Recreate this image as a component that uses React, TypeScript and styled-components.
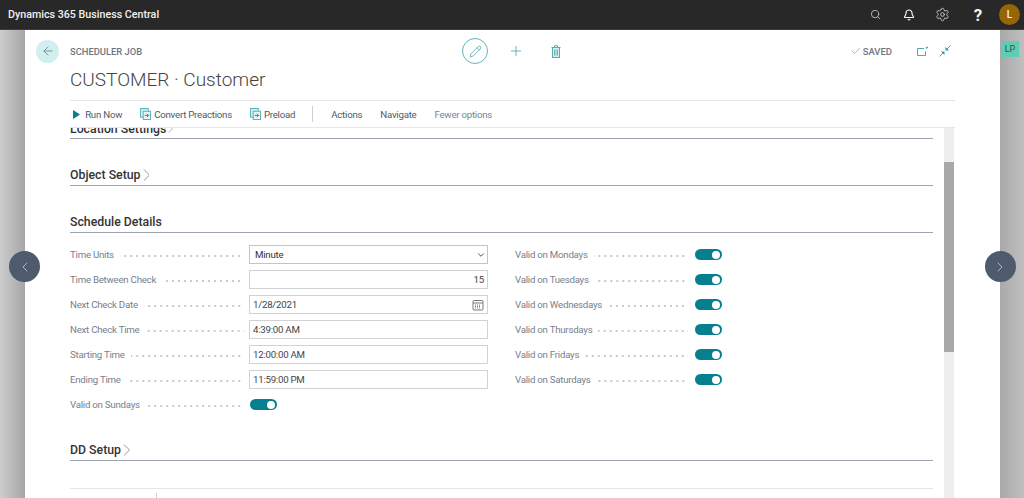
import * as React from 'react'
import styled, { createGlobalStyle } from 'styled-components'
import {
  ArrowLeft,
  Bell,
  Check,
  ChevronDown,
  ChevronLeft,
  ChevronRight,
  Pencil,
  Plus,
  Search,
  Settings,
} from 'lucide-react'

const GlobalStyle = createGlobalStyle`
  html, body {
    margin: 0;
    padding: 0;
    background: #fff;
    overflow: hidden;
  }
  * { box-sizing: border-box; }
`

const Page = styled.div`
  position: relative;
  width: 1024px;
  height: 498px;
  overflow: hidden;
  font-family: Roboto, "Open Sans", sans-serif;
  display: flex;
  flex-direction: column;
`

const TopBar = styled.header`
  height: 30px;
  flex: none;
  background: #282828;
  border-bottom: 1px solid #3c3c3c;
  display: flex;
  align-items: center;
  padding: 0 4px 0 8px;
  color: #fff;
`

const Brand = styled.div`
  font-size: 10.7px;
  font-weight: 500;
  color: #f0f0f0;
  flex: 1;
`

const TopIcons = styled.div`
  display: flex;
  align-items: center;
  gap: 20px;
  color: #d8d8d8;
`

const SearchSlot = styled.span`
  display: flex;
  margin-right: 2px;
`

const Avatar = styled.div`
  width: 21px;
  height: 21px;
  border-radius: 50%;
  background: #956508;
  color: #f4f4f4;
  font-size: 10px;
  font-weight: 500;
  display: flex;
  align-items: center;
  justify-content: center;
  margin-left: -5px;
`

const Help = styled.span`
  font-size: 17px;
  font-weight: 700;
  width: 12px;
  margin-left: 2px;
  text-align: center;
  color: #f4f4f4;
`

const Stage = styled.div`
  flex: 1;
  min-height: 0;
  display: flex;
`

const LeftStrip = styled.div`
  width: 25px;
  flex: none;
  background: linear-gradient(90deg, #cdcdcd, #a6a6a6);
`

const RightStrip = styled.div`
  width: 24px;
  flex: none;
  padding: 11px 0 0 1px;
  background: linear-gradient(90deg, #a9a9a9, #bfbfbf);
`

const Badge = styled.div`
  width: 18px;
  height: 16px;
  background: #5fcdb4;
  color: #35514a;
  font-size: 9px;
  display: flex;
  align-items: center;
  justify-content: center;
`

const Card = styled.main`
  flex: 1;
  min-width: 0;
  background: #fff;
  display: flex;
  flex-direction: column;
  padding: 0 45px 0 45px;
`

const HeadRow = styled.div`
  height: 36px;
  padding-top: 6px;
  margin-left: -34px;
  display: flex;
  align-items: center;
  flex: none;
`

const BackButton = styled.div`
  width: 23px;
  height: 23px;
  border-radius: 50%;
  background: #d3eeee;
  color: #5d7f85;
  display: flex;
  align-items: center;
  justify-content: center;
  margin-right: 11px;
`

const Kicker = styled.div`
  width: 392px;
  font-size: 9.4px;
  font-weight: 500;
  color: #6d7683;
`

const PencilCircle = styled.div`
  width: 26px;
  height: 26px;
  border-radius: 50%;
  border: 1px solid #62b6bb;
  color: #4f9aa0;
  display: flex;
  align-items: center;
  justify-content: center;
  margin-right: 20px;
`

const HeadAction = styled.div<{ $gap: number }>`
  color: #58acb1;
  display: flex;
  margin-right: ${p => p.$gap}px;
`

const Saved = styled.div`
  margin-left: auto;
  display: flex;
  align-items: center;
  gap: 1px;
  color: #6f7784;
  font-size: 9.5px;
  font-weight: 500;
  margin-right: 25px;
`

const HeadEnd = styled.div`
  display: flex;
  align-items: center;
  gap: 11px;
  margin-right: 4px;
`

const Title = styled.h1`
  margin: 0;
  height: 35px;
  flex: none;
  font-size: 19px;
  line-height: 28px;
  font-weight: 300;
  color: #444;
  border-bottom: 1px solid #e6e6e6;
`

const ActionBar = styled.nav`
  height: 27px;
  flex: none;
  display: flex;
  align-items: center;
  border-bottom: 1px solid #e6e6e6;
  padding-left: 3px;
  font-size: 9.7px;
  letter-spacing: -0.25px;
`

const Action = styled.div<{ $gap: number; $muted?: boolean }>`
  display: flex;
  align-items: center;
  gap: 3px;
  margin-right: ${p => p.$gap}px;
  color: ${p => (p.$muted ? '#7c8590' : '#505a66')};
  white-space: nowrap;
`

const Divider = styled.div`
  width: 1px;
  height: 16px;
  background: #cfcfcf;
  margin-right: 18px;
`

const Scroller = styled.div`
  flex: 1;
  min-height: 0;
  display: flex;
`

const ScrollBody = styled.div`
  width: 863px;
  flex: none;
  overflow: hidden;
  margin-right: 11px;
`

const Section = styled.section<{ $height: number; $clipped?: boolean }>`
  height: ${p => p.$height}px;
  border-bottom: 1px solid #9ea6b3;
  display: flex;
  align-items: flex-end;
  gap: 2px;
  padding-bottom: ${p => (p.$clipped ? 8 : 2)}px;
  font-size: 12.3px;
  line-height: ${p => (p.$clipped ? '2px' : '16px')};
  font-weight: 500;
  color: #333;

  svg {
    margin-bottom: ${p => (p.$clipped ? -3 : 2)}px;
  }
`

const FormGrid = styled.div`
  display: grid;
  grid-template-columns: 418px 300px;
  column-gap: 27px;
  padding-top: 9px;
  height: 207px;
  align-content: start;
`

const Column = styled.div`
  display: flex;
  flex-direction: column;
`

const Row = styled.div`
  height: 25px;
  display: flex;
  align-items: center;
  font-size: 9.7px;
  letter-spacing: -0.25px;
  color: #76808e;
`

const Label = styled.div<{ $width: number }>`
  width: ${p => p.$width}px;
  flex: none;
  display: flex;
  align-items: center;
  gap: 6px;
  margin-right: 5px;
  white-space: nowrap;
`

const Leader = styled.span`
  flex: 1;
  height: 2px;
  margin-top: 2px;
  background: radial-gradient(circle at 1px 1px, #c3c8cf 0.7px, transparent 0.9px) right / 6px 2px repeat-x;
`

const Field = styled.div<{ $right?: boolean }>`
  flex: 1;
  height: 19px;
  border: 1px solid #d2d2d2;
  background: #fff;
  color: #444;
  display: flex;
  align-items: center;
  justify-content: ${p => (p.$right ? 'flex-end' : 'space-between')};
  padding: 0 3px;
`

const SelectField = styled(Field)`
  padding: 0 1px 0 5px;
  color: #333;
  border-color: #c4c4c4;
`

const Toggle = styled.div<{ $inset: number }>`
  width: 27px;
  height: 11px;
  border-radius: 6px;
  background: #06808e;
  margin-left: ${p => p.$inset}px;
  display: flex;
  align-items: center;
  justify-content: flex-end;
  padding-right: 2px;

  &::after {
    content: '';
    width: 8px;
    height: 8px;
    border-radius: 50%;
    background: #fff;
  }
`

const TableHead = styled.div`
  margin-top: 27px;
  height: 20px;
  border-top: 1px solid #e2e5ea;
  display: flex;
`

const TableColumn = styled.div`
  width: 87px;
  height: 10px;
  margin-top: 4px;
  border-right: 1px solid #cfcfcf;
`

const ScrollTrack = styled.div`
  width: 10px;
  flex: none;
  background: #eeeeee;
  padding-top: 34px;
`

const ScrollThumb = styled.div`
  height: 190px;
  background: #a8a8a8;
`

const PagerButton = styled.div<{ $side: 'left' | 'right' }>`
  position: absolute;
  top: 251px;
  ${p => (p.$side === 'left' ? 'left: 9px;' : 'left: 984.5px;')}
  width: 31px;
  height: 31px;
  border-radius: 50%;
  background: #4e5b6e;
  color: #c9ced6;
  display: flex;
  align-items: center;
  justify-content: center;
`

const CalendarIcon = () => (
  <svg width="12" height="12" viewBox="0 0 12 12" fill="none" stroke="#6b6b6b" strokeWidth="0.9">
    <rect x="1" y="1.5" width="10" height="9.5" rx="1" />
    <path d="M1 4h10" />
    <path d="M3 6h6M3 7.5h6M3 9h6" strokeDasharray="1 1" />
  </svg>
)

// page-with-arrow glyph used by Convert Preactions and Preload
const DocArrowIcon = () => (
  <svg width="11" height="12" viewBox="0 0 12 13" fill="none">
    <rect x="0.5" y="0.5" width="8.5" height="9.5" fill="#d3eef0" stroke="#4fb0b6" />
    <rect x="3.5" y="3.5" width="8" height="9" fill="#e8f6f7" stroke="#4fb0b6" />
    <path d="M5.2 8h4M7.6 6.2 9.4 8 7.6 9.8" stroke="#3b6f75" strokeWidth="1" />
  </svg>
)

const TrashIcon = () => (
  <svg width="10" height="13" viewBox="0 0 10 13" fill="none" stroke="#58acb1">
    <path d="M.5 2.5h9M3.5 2.5V.7h3v1.8" />
    <rect x="1.5" y="2.5" width="7" height="10" fill="#d5eef0" />
    <path d="M3.5 4.5v6M5 4.5v6M6.5 4.5v6" strokeWidth="0.8" />
  </svg>
)

const OpenNewIcon = () => (
  <svg width="11" height="10" viewBox="0 0 11 10" fill="none" stroke="#4fa9ae" strokeWidth="1">
    <path d="M7 2.5H.5v7h8V5.5" />
    <path d="M9 2.5 10.5.8" strokeWidth="1.6" />
  </svg>
)

const CollapseIcon = () => (
  <svg width="12" height="12" viewBox="0 0 12 12">
    <path d="M11.5.5 8 4" stroke="#4fa9ae" fill="none" />
    <path d="M6.5 5.5V2l3.5 3.5z" fill="#2f97a0" />
    <path d="M.5 11.5 4 8" stroke="#4fa9ae" fill="none" />
    <path d="M5.5 6.5V10L2 6.5z" fill="#2f97a0" />
  </svg>
)

const PlayIcon = () => (
  <svg width="7" height="9" viewBox="0 0 7 9">
    <path d="M0 0l7 4.5L0 9z" fill="#0e7c86" />
  </svg>
)

const SectionChevron = ({ height }: { height: number }) => (
  <svg width={height * 0.58} height={height} viewBox="0 0 7 12" fill="none" stroke="#7b7b7b" strokeWidth="0.8">
    <path d="M1 .5 6.5 6 1 11.5" />
  </svg>
)

const leftFields = [
  { label: 'Time Units', select: 'Minute' },
  { label: 'Time Between Check', value: '15', right: true },
  { label: 'Next Check Date', value: '1/28/2021', calendar: true },
  { label: 'Next Check Time', value: '4:39:00 AM' },
  { label: 'Starting Time', value: '12:00:00 AM' },
  { label: 'Ending Time', value: '11:59:00 PM' },
]

const rightToggles = ['Mondays', 'Tuesdays', 'Wednesdays', 'Thursdays', 'Fridays', 'Saturdays']

export default function App() {
  return (
    <Page>
      <GlobalStyle />
      <TopBar>
        <Brand>Dynamics 365 Business Central</Brand>
        <TopIcons>
          <SearchSlot>
            <Search size={11} color="#bdbdbd" />
          </SearchSlot>
          <Bell size={12} color="#f4f4f4" strokeWidth={2.4} />
          <Settings size={15} color="#c4c4c4" strokeWidth={1.5} />
          <Help>?</Help>
          <Avatar>L</Avatar>
        </TopIcons>
      </TopBar>
      <Stage>
        <LeftStrip />
        <Card>
          <HeadRow>
            <BackButton>
              <ArrowLeft size={14} strokeWidth={1.3} />
            </BackButton>
            <Kicker>SCHEDULER JOB</Kicker>
            <PencilCircle>
              <Pencil size={13} strokeWidth={1.4} />
            </PencilCircle>
            <HeadAction $gap={27}>
              <Plus size={16} strokeWidth={1.3} />
            </HeadAction>
            <HeadAction $gap={0}>
              <TrashIcon />
            </HeadAction>
            <Saved>
              <Check size={12} strokeWidth={1} />
              SAVED
            </Saved>
            <HeadEnd>
              <OpenNewIcon />
              <CollapseIcon />
            </HeadEnd>
          </HeadRow>
          <Title>CUSTOMER · Customer</Title>
          <ActionBar>
            <Action $gap={18}>
              <PlayIcon />
              &nbsp;Run Now
            </Action>
            <Action $gap={18}>
              <DocArrowIcon />
              Convert Preactions
            </Action>
            <Action $gap={17}>
              <DocArrowIcon />
              Preload
            </Action>
            <Divider />
            <Action $gap={18}>Actions</Action>
            <Action $gap={18}>Navigate</Action>
            <Action $gap={0} $muted>
              Fewer options
            </Action>
          </ActionBar>
          <Scroller>
            <ScrollBody>
              <Section $height={11} $clipped>
                Location Settings
                <SectionChevron height={8} />
              </Section>
              <Section $height={47}>
                Object Setup
                <SectionChevron height={12} />
              </Section>
              <Section $height={47}>Schedule Details</Section>
              <FormGrid>
                <Column>
                  {leftFields.map(f => (
                    <Row key={f.label}>
                      <Label $width={174}>
                        {f.label}
                        <Leader />
                      </Label>
                      {f.select ? (
                        <SelectField>
                          {f.select}
                          <ChevronDown size={10} strokeWidth={2} color="#333" />
                        </SelectField>
                      ) : (
                        <Field $right={f.right}>
                          {f.value}
                          {f.calendar && <CalendarIcon />}
                        </Field>
                      )}
                    </Row>
                  ))}
                  <Row>
                    <Label $width={174}>
                      Valid on Sundays
                      <Leader />
                    </Label>
                    <Toggle $inset={1} />
                  </Row>
                </Column>
                <Column>
                  {rightToggles.map(day => (
                    <Row key={day}>
                      <Label $width={173}>
                        Valid on {day}
                        <Leader />
                      </Label>
                      <Toggle $inset={2} />
                    </Row>
                  ))}
                </Column>
              </FormGrid>
              <Section $height={21}>
                DD Setup
                <SectionChevron height={12} />
              </Section>
              <TableHead>
                <TableColumn />
              </TableHead>
            </ScrollBody>
            <ScrollTrack>
              <ScrollThumb />
            </ScrollTrack>
          </Scroller>
        </Card>
        <RightStrip>
          <Badge>LP</Badge>
        </RightStrip>
      </Stage>
      <PagerButton $side="left">
        <ChevronLeft size={16} strokeWidth={1.2} />
      </PagerButton>
      <PagerButton $side="right">
        <ChevronRight size={16} strokeWidth={1.2} />
      </PagerButton>
    </Page>
  )
}
